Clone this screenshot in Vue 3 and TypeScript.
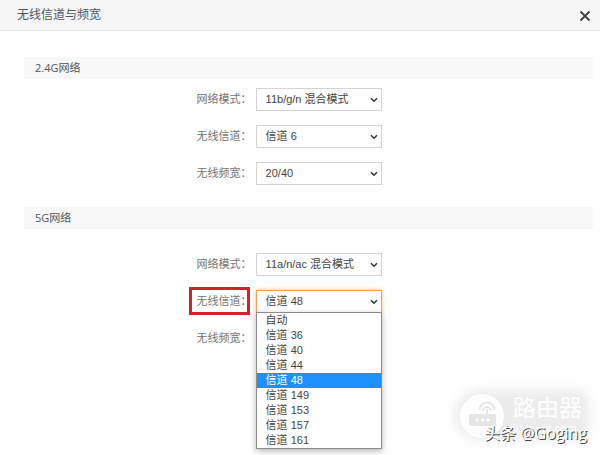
<script setup lang="ts">
import { ref } from 'vue'

interface Field {
  id: string
  label: string
  value: string
  options: string[]
  marked?: boolean
  open?: boolean
}
interface Section {
  title: string
  fields: Field[]
}

const channels5g = ['自动', '信道 36', '信道 40', '信道 44', '信道 48', '信道 149', '信道 153', '信道 157', '信道 161']

const sections = ref<Section[]>([
  {
    title: '2.4G网络',
    fields: [
      { id: 'mode24', label: '网络模式：', value: '11b/g/n 混合模式', options: ['11b/g/n 混合模式'] },
      { id: 'channel24', label: '无线信道：', value: '信道 6', options: ['自动', '信道 1', '信道 6', '信道 11'] },
      { id: 'width24', label: '无线频宽：', value: '20/40', options: ['20', '40', '20/40'] },
    ],
  },
  {
    title: '5G网络',
    fields: [
      { id: 'mode5', label: '网络模式：', value: '11a/n/ac 混合模式', options: ['11a/n/ac 混合模式'] },
      { id: 'channel5', label: '无线信道：', value: '信道 48', options: channels5g, marked: true, open: true },
      { id: 'width5', label: '无线频宽：', value: '20/40/80', options: ['20', '20/40', '20/40/80'] },
    ],
  },
])

function pick(field: Field, option: string) {
  field.value = option
  field.open = false
}
</script>

<template>
  <main class="dialog">
    <header class="titlebar">
      <h1>无线信道与频宽</h1>
      <button class="close" type="button" aria-label="关闭">
        <svg viewBox="0 0 12 12" width="12" height="12"><path d="M1.500 1.500 10.500 10.500M10.500 1.500 1.500 10.500" /></svg>
      </button>
    </header>

    <form class="body">
      <section v-for="s in sections" :key="s.title">
        <h2>{{ s.title }}</h2>
        <div v-for="f in s.fields" :key="f.id" class="row">
          <div class="name">
            <label :for="f.id" :class="{ marked: f.marked }">{{ f.label }}</label>
          </div>
          <div class="control">
            <select :id="f.id" v-model="f.value" :class="{ active: f.open }">
              <option v-for="o in f.options" :key="o">{{ o }}</option>
            </select>
            <svg class="chevron" viewBox="0 0 8 6" width="8" height="6"><path d="M1 1.200 4 4.200 7 1.200" /></svg>
            <ul v-if="f.open" class="menu" role="listbox">
              <li
                v-for="o in f.options"
                :key="o"
                role="option"
                :aria-selected="o === f.value"
                :class="{ selected: o === f.value }"
                @click="pick(f, o)"
              >{{ o }}</li>
            </ul>
          </div>
        </div>
      </section>
    </form>

    <div class="watermark">
      <div class="brand">
        <svg class="logo" viewBox="0 0 44 44" width="44" height="44">
          <circle cx="22" cy="22" r="22" fill="#fff" />
          <rect x="9" y="20" width="27" height="12" rx="2" fill="#e6e6e6" />
          <g fill="none" stroke="#e6e6e6" stroke-width="2">
            <path d="M27 15v6" />
            <path d="M19.500 16a7.500 7.500 0 0 1 15 0" />
            <path d="M23 17a4 4 0 0 1 8 0" />
          </g>
          <g fill="#fff"><circle cx="17" cy="26" r="1.500" /><circle cx="22.500" cy="26" r="1.500" /><circle cx="28" cy="26" r="1.500" /></g>
        </svg>
        <div class="brand-text">
          <span class="brand-name">路由器</span>
          <span class="brand-url">luyouqi.com</span>
        </div>
      </div>
      <div class="author">头条 @Goging</div>
    </div>
  </main>
</template>

<style>
body {
  background: #fff;
}
</style>

<style scoped>
.dialog {
  position: relative;
  min-height: 100vh;
  overflow: hidden;
  box-sizing: border-box;
  font-family: "Liberation Sans", "Noto Sans CJK SC", sans-serif;
  font-size: 11px;
  line-height: 15px;
  color: #444;
}
.titlebar {
  display: flex;
  align-items: center;
  justify-content: space-between;
  height: 30px;
  padding: 0 9px 0 17px;
  background: #f6f6f6;
  border-bottom: 1px solid #e8e8e8;
}
h1,
h2 {
  margin: 0;
  font-family: "Open Sans", "Noto Sans CJK SC", sans-serif;
  font-weight: 400;
  color: #50565a;
}
h1 {
  font-size: 12px;
  line-height: 18px;
}
.close {
  display: flex;
  margin-top: 2px;
  padding: 0;
  border: 0;
  background: none;
}
.close path {
  fill: none;
  stroke: #3c4144;
  stroke-width: 1.8;
}
.body {
  padding: 26px 7px 0 24px;
}
h2 {
  margin-bottom: 9px;
  padding-left: 11px;
  font-size: 11px;
  line-height: 22px;
  background: #f8f8f8;
}
section + section {
  margin-top: 22px;
}
section + section h2 {
  margin-bottom: 24px;
}
.row {
  display: grid;
  grid-template-columns: 40% 126px;
  column-gap: 4px;
  align-items: center;
  margin-bottom: 14px;
}
.name {
  text-align: right;
  color: #747474;
}
.name label {
  position: relative;
  display: inline-block;
}
.marked::after {
  content: "";
  position: absolute;
  inset: -7px 2px -6px -8px;
  border: 3px solid #cf2229;
}
.control {
  position: relative;
}
select {
  display: block;
  appearance: none;
  box-sizing: border-box;
  width: 100%;
  height: 23px;
  margin: 0;
  padding: 0 16px 0 9px;
  border: 1px solid #d4d4d4;
  border-radius: 0;
  background: #fff;
  color: #444;
  font: inherit;
}
select.active {
  border-color: #e9a15c;
  box-shadow: 0 0 4px #f3bd88;
}
.chevron {
  position: absolute;
  right: 4px;
  top: 9px;
  pointer-events: none;
}
.chevron path {
  fill: none;
  stroke: #333;
  stroke-width: 1.5;
}
.menu {
  position: absolute;
  z-index: 2;
  top: 22px;
  left: 0;
  right: 0;
  margin: 0;
  padding: 0;
  list-style: none;
  background: #fff;
  border: 1px solid #8c8c8c;
  box-shadow: 0 2px 6px rgba(0, 0, 0, 0.3);
}
.menu li {
  padding-left: 9px;
}
.menu .selected {
  background: #1e90ff;
  color: #fff;
}
.watermark {
  position: absolute;
  right: 13px;
  bottom: 11px;
}
.brand {
  position: relative;
  display: flex;
  gap: 9px;
  padding-right: 5px;
  color: #fff;
}
.brand::before {
  content: "";
  position: absolute;
  inset: -4px -2px -2px -5px;
  border-radius: 26px 12px 12px 26px;
  background: #ececec;
  filter: blur(5px);
}
.logo {
  position: relative;
}
.brand-text {
  position: relative;
  display: flex;
  flex-direction: column;
}
.brand-name {
  font-size: 23px;
  line-height: 28px;
}
.brand-url {
  font-size: 12px;
  line-height: 14px;
}
.author {
  position: relative;
  margin-top: -14px;
  padding-bottom: 2px;
  text-align: right;
  font-family: "Open Sans", "Noto Sans CJK SC", sans-serif;
  font-size: 16px;
  line-height: 18px;
  color: #fff;
  text-shadow: 1px 1px 0 #444;
}
</style>
